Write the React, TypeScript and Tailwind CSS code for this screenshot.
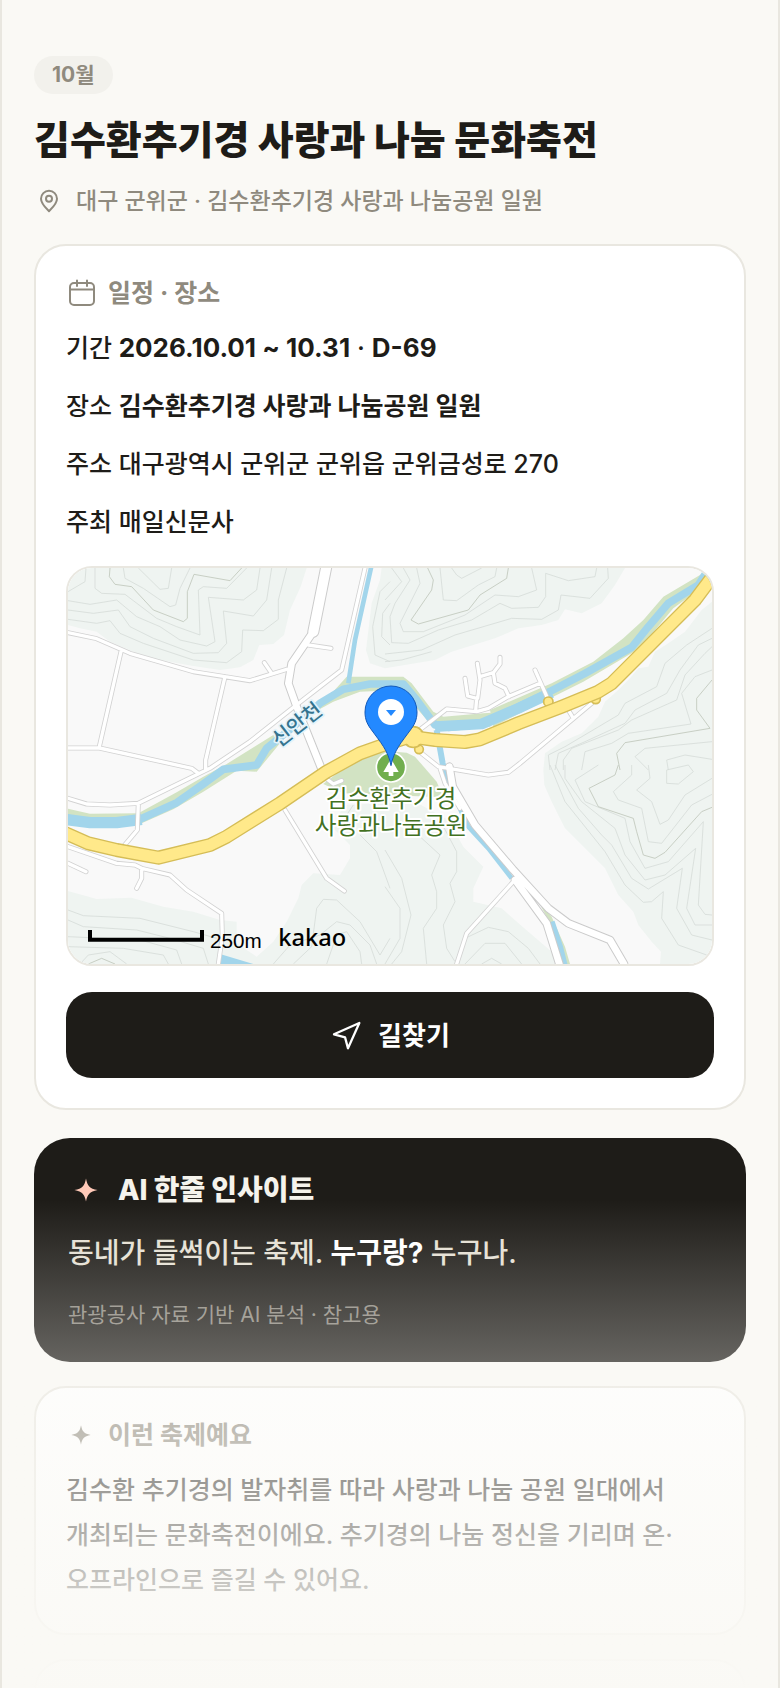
import type { ReactNode } from "react";

const details = [
  { label: "기간", date: "2026.10.01 ~ 10.31", dday: "D-69" },
  { label: "장소", strong: "김수환추기경 사랑과 나눔공원 일원" },
  { label: "주소", text: "대구광역시 군위군 군위읍 군위금성로 270" },
  { label: "주최", text: "매일신문사" },
];

export default function App() {
  return (
    <div className="relative h-screen overflow-hidden border-x-2 border-[#e9e7e0] bg-[#faf9f5] px-8 pt-14 font-['Inter','Noto_Sans_CJK_KR',sans-serif] font-medium text-[#1e1c18]">
      <main>
        <header>
          <span className="inline-flex h-[38px] items-center rounded-full bg-[#f2f1ec] px-[18px] align-top text-[21px] font-bold text-[#8f8a7e]">
            10월
          </span>
          <h1 className="mt-5 text-[39px] leading-[52px] font-extrabold">김수환추기경 사랑과 나눔 문화축전</h1>
          <p className="mt-5 flex items-center gap-3 text-[23px] leading-[30px] text-[#8f8a7e]">
            <span className="flex w-[30px] justify-center">
              <PinIcon />
            </span>
            대구 군위군 · 김수환추기경 사랑과 나눔공원 일원
          </p>
        </header>

        <section className="mt-7 rounded-[32px] border-2 border-[#e9e7e0] bg-white p-[30px]">
          <CardTitle icon={<CalendarIcon />}>일정 · 장소</CardTitle>
          <ul className="mt-4 flex flex-col gap-[14px] text-[25px] leading-[44px]">
            {details.map((row) => (
              <li key={row.label}>
                {row.label}{" "}
                {row.date && (
                  <span className="text-[26px]">
                    <strong className="font-bold">{row.date}</strong> · <strong className="font-bold">{row.dday}</strong>
                  </span>
                )}
                {row.strong && <strong className="font-bold">{row.strong}</strong>}
                {row.text}
              </li>
            ))}
          </ul>
          <div className="mt-[22px] overflow-hidden rounded-[26px] border-2 border-[#e9e7e0]">
            <FestivalMap />
          </div>
          <button
            type="button"
            className="mt-[26px] flex h-[86px] w-full items-center justify-center gap-4 rounded-[26px] bg-[#1e1c18] text-[26px] font-bold text-white"
          >
            <NavigationIcon />
            길찾기
          </button>
        </section>

        <section className="mt-7 rounded-[36px] bg-[#1e1c18] px-[34px] pt-[35px] pb-8">
          <h2 className="flex items-center gap-[14px] text-[28px] leading-[34px] font-extrabold text-[#f5f3ec]">
            <span className="flex w-9 justify-center text-[#ffc9b8]">
              <Sparkle className="size-6" />
            </span>
            AI 한줄 인사이트
          </h2>
          <p className="mt-6 text-[28px] leading-[44px] text-[#e5e0d4]">
            동네가 들썩이는 축제. <strong className="font-bold text-white">누구랑?</strong> 누구나.
          </p>
          <p className="mt-[25px] text-[21px] leading-[30px] font-normal text-[#8c887f]">
            관광공사 자료 기반 AI 분석 · 참고용
          </p>
        </section>

        <section className="mt-6 rounded-[32px] border-2 border-[#e9e7e0] bg-white p-[30px]">
          <CardTitle icon={<Sparkle className="size-5" />}>이런 축제예요</CardTitle>
          <p className="mt-4 text-[25px] leading-[45px] break-keep">
            김수환 추기경의 발자취를 따라 사랑과 나눔 공원 일대에서 개최되는 문화축전이에요. 추기경의 나눔
            정신을 기리며 온·오프라인으로 즐길 수 있어요.
          </p>
        </section>

        <section className="mt-6 h-60 rounded-[32px] border-2 border-[#e9e7e0] bg-white" />
      </main>

      {/* fades the rest of the page out towards the fold */}
      <div className="pointer-events-none absolute inset-x-[-2px] bottom-0 h-[488px] bg-linear-to-b from-[#faf9f5]/0 to-[#faf9f5]/98" />
    </div>
  );
}

function CardTitle({ icon, children }: { icon: ReactNode; children: ReactNode }) {
  return (
    <h2 className="flex items-center gap-3 text-[25px] leading-[34px] font-bold text-[#8f8a7e]">
      <span className="flex w-[30px] justify-center">{icon}</span>
      {children}
    </h2>
  );
}

function PinIcon() {
  return (
    <svg viewBox="0 0 24 24" className="size-6" fill="none" stroke="currentColor" strokeWidth="2">
      <path d="M12 22.2C9 19.2 4 14.8 4 9.8a8 8 0 0 1 16 0c0 5-5 9.400-8 12.400z" strokeLinejoin="round" />
      <circle cx="12" cy="9.700" r="3" />
    </svg>
  );
}

function CalendarIcon() {
  return (
    <svg
      viewBox="0 0 30 30"
      className="size-[30px]"
      fill="none"
      stroke="currentColor"
      strokeWidth="2"
      strokeLinecap="round"
    >
      <rect x="4" y="5" width="24" height="22" rx="4" />
      <path d="M4 11.500h24M11 2.500v5.500M21 2.500v5.500" />
    </svg>
  );
}

function NavigationIcon() {
  return (
    <svg
      viewBox="0 0 24 24"
      className="size-8"
      fill="none"
      stroke="currentColor"
      strokeWidth="1.700"
      strokeLinejoin="round"
    >
      <path d="M3 11.500 22 3l-8.500 19-2.200-8.200z" />
    </svg>
  );
}

function Sparkle({ className }: { className: string }) {
  return (
    <svg viewBox="0 0 24 24" className={className} fill="currentColor">
      <path d="M12 .4c1.400 7.300 3.500 10 11.600 11.600C15.500 13.600 13.400 16.300 12 23.600 10.600 16.300 8.500 13.600.4 12 8.500 10.400 10.600 7.700 12 .4z" />
    </svg>
  );
}

const hills = [
  "M24 24H740L722 80 690 150 672 225 640 252 598 255 580 300 540 322 480 330 400 318 300 300 230 280 150 245 110 215 60 205 24 195Z",
  "M965 24 960 60 935 130 918 270 930 310 975 325 1125 300 1175 275 1305 235 1375 205 1445 195 1495 180 1515 148 1565 160 1625 130 1665 75 1695 24Z",
  "M1956 125 1925 150 1875 215 1825 250 1785 275 1765 320 1735 325 1710 355 1675 390 1635 425 1615 470 1565 520 1505 545 1455 580 1450 630 1453 675 1475 725 1515 805 1575 865 1635 925 1675 1005 1720 1055 1735 1095 1775 1145 1803 1175 1800 1212H1956Z",
  "M24 993 110 1017 215 1013 310 1040 400 1055 480 1080 530 1085 530 1150 590 1190 640 1145 680 1085 715 1015 725 975 760 940 840 945 870 895 870 855 820 805 850 735 1065 725 1165 780 1210 860 1270 920 1240 985 1240 1025 1325 1045 1405 1115 1475 1175 1485 1212H24Z",
];

// contour lines, one sheet per map quadrant
const contours = [
  {
    move: "translate(0 0)",
    lines: [
      "M24 95 75 65 78 24",
      "M235 24 300 88 325 85 335 24",
      "M190 24 195 55 250 85 330 140 347 135 360 85 390 24",
      "M105 24 105 85 125 100 195 103 290 175 350 200 420 225 415 90 430 80 500 85 560 24",
      "M24 122 90 133 170 120 230 170 300 200 360 240 440 258 465 245 445 112 550 120 590 90 600 24",
      "M24 150 100 160 175 150 210 200 280 235 400 280 475 278 500 250 490 153 580 168 620 120 635 24",
      "M24 178 110 190 150 182 180 220 250 250 400 300 500 308 545 275 548 210 610 212 655 178 655 120 680 24",
      "M990 65 960 95 938 200 945 285 990 305M990 130 968 160 965 230 990 255",
    ],
    index: "M150 24 148 50 165 73 215 80 280 150 370 185 382 175 382 95 402 43 510 62 545 24",
  },
  {
    move: "translate(975 0)",
    lines: [
      "M200 24 215 45 230 55 290 24",
      "M165 24 175 120 215 122 280 75 330 50 335 24",
      "M95 24 105 70 45 190 55 215 115 215 240 165 330 105 400 110 455 90 440 24",
      "M55 24 75 60 30 130 15 170 20 248 70 250 160 210 260 180 345 130 380 145 460 142 482 110 482 40 550 62 630 50 635 24",
      "M20 24 50 65 0 120M0 282 110 270 210 225 380 175 470 178 520 150 528 105 615 115 670 55 668 24",
      "M0 305 50 300 140 275",
      "M981 205 905 255 840 310 815 380 720 430 700 465 540 560 490 585 495 630",
      "M981 235 940 255 885 330 845 400 750 450 720 490 600 545 520 580 510 630",
      "M981 260 960 280 900 345 875 420 740 480 700 510 560 565 535 600 535 630",
      "M981 330 930 350 890 400 905 450 918 492 730 520 680 550 600 575 590 630",
      "M981 545 780 565 750 590 790 630M981 598 900 585 845 600 850 630",
    ],
    index: "M128 24 145 60 140 90 78 180 100 192 250 150 285 105 365 55 370 24M981 360 935 415 935 450 975 505 720 548 695 580 705 630",
  },
  {
    move: "translate(0 615)",
    lines: [
      "M24 435 70 452 240 460 400 500 470 520",
      "M24 465 70 485 230 495 330 520 430 550 445 597",
      "M24 515 240 525 350 555 365 597",
      "M24 545 190 550 310 570 325 597",
      "M60 597 85 570 150 560 200 597",
      "M700 597 755 545 770 430 790 403 830 405 900 470 960 570 990 520",
      "M640 597 690 540 780 510 830 470 870 480 930 540 950 597",
      "M800 597 830 510 860 500 900 560 905 597",
      "M880 120 850 165M900 210 950 260 990 370",
    ],
    index: "M85 597 125 580 165 597",
  },
  {
    move: "translate(975 615)",
    lines: [
      "M495 0 540 110 660 260 720 360 775 412 800 410 835 380 830 460 880 540 965 570",
      "M510 0 580 130 650 210 680 240 740 340 790 372 892 310 875 430 920 510 981 525",
      "M540 0 540 40 590 110 690 190 720 270 780 345 840 330 932 250 905 430 930 480 981 480",
      "M640 0 570 45 600 110 720 160 735 230 780 310 850 290 955 170 940 420 960 448 981 450",
      "M740 0 740 30 685 80 700 105 770 130 790 230 830 235 920 120 981 88",
      "M790 0 795 40 755 75 800 110 825 178 850 165 900 90 981 40",
      "M845 15 910 0 925 20 880 57 845 55Z",
      "M105 215 165 270 140 330 155 380 155 430 115 490 125 597",
      "M165 165 215 260 215 320 195 355 210 410 175 480 185 550 210 590",
      "M0 255 50 340 78 450 50 560 20 597M0 365 45 430 45 520 0 597",
      "M240 520 310 487 370 500 430 550 465 597M240 597 300 535 360 535 410 597M290 597 320 580 350 597",
    ],
    index: "M700 0 690 30 612 70 640 125 745 160 755 200 775 270 810 280 840 262 950 140 981 127",
  },
];

const lanes = [
  "M24 218 110 236 210 280 400 335 495 350 570 362 680 328",
  "M183 275 118 560M24 564H118L395 625 415 640",
  "M495 350 437 600 437 630",
  "M915 24 845 330 780 380 690 450 570 545 450 625 235 730 150 735 80 732 24 715",
  "M235 730 232 810 190 860",
  "M745 255 813 265M613 308 635 340",
  "M24 860 170 910 225 915 245 925 330 945 380 990 485 1060 487 1130 475 1212",
  "M245 925 245 955 230 985M24 910 78 935",
  "M675 750 800 955 853 993M785 645 820 672 845 662",
  "M1085 505 1160 447 1250 455 1285 445 1345 410 1440 370M1425 330 1465 420",
  "M1215 355 1223 408 1250 415 1247 452M1252 310 1260 360 1253 415",
  "M1260 350 1300 338 1320 312 1320 292M1300 338 1305 370 1335 385 1347 410",
  "M1085 580 1135 620 1285 645 1345 637 1380 610 1595 430M1525 450 1540 475",
  "M1140 625 1155 670 1200 745M1360 965 1220 1120 1190 1212",
];

const roads = [
  "M760 215 695 310 685 370 710 440 790 640",
  "M1168 620 1178 680 1245 795 1360 930 1465 1045 1525 1090 1650 1140 1692 1212",
  "M1365 960 1460 1090 1498 1212",
];

const wideRoad = "M801 10 760 215";

const highway =
  "M0 812 24 823 85 850 170 870 295 893 450 855 500 830 660 730 800 635 900 580 970 555 1050 530 1125 540 1215 546 1260 538 1375 490 1505 440 1615 395 1655 370 1775 250 1905 120 1980 20";

const river =
  "M0 770 24 775 90 787 170 787 240 778 350 728 430 672 490 628 590 615 620 565 700 500 780 430 850 388 930 372 1030 372 1070 420 1125 495 1165 502 1265 492 1375 440 1475 392 1575 340 1715 262 1765 200 1825 130 1915 75 1950 20";

function FestivalMap() {
  return (
    <svg
      viewBox="24 24 1932 1188"
      className="block h-auto w-full bg-[#f9f9f9]"
      role="img"
      aria-label="김수환추기경 사랑과나눔공원 지도"
      fill="none"
    >
      <g fill="#eff4f1">
        {hills.map((d) => (
          <path key={d} d={d} />
        ))}
      </g>
      <g strokeWidth="2.500" strokeLinejoin="round">
        {contours.map((sheet) => (
          <g key={sheet.move} transform={sheet.move}>
            <path d={sheet.lines.join("")} stroke="#d6dcd8" />
            <path d={sheet.index} stroke="#bfc6ba" />
          </g>
        ))}
      </g>

      {/* green banks and park */}
      <g fill="#d2e3c3">
        <path d="M790 672 870 610 970 572 1040 578 1065 590 1130 665 1150 712 850 700Z" />
        <path d="M24 746 90 761 235 760 350 697 430 650 500 612 640 525 660 550 590 635 530 632 430 695 340 748 240 792 24 785Z" />
        <path d="M860 350 1030 350 1055 370 1120 455 1150 470 1270 460 1340 455 1290 500 1120 500 1020 390 900 395 820 425 765 455Z" />
        <path d="M1290 450 1475 370 1600 305 1690 235 1750 180 1810 110 1920 45 1950 24 1956 60 1840 145 1740 265 1570 365 1300 500Z" />
        <path d="M1430 1015 1475 1070 1515 1160 1530 1212H1505L1470 1090Z" />
      </g>
      <g stroke="#a2d5eb" strokeLinejoin="round">
        <path d={river} strokeWidth="23" />
        <path d="M0 776 90 788 170 788 245 778" strokeWidth="34" />
        <path d="M1125 500 1265 492 1375 445 1475 398" strokeWidth="32" />
        <path d="M936 10 885 240 865 370" strokeWidth="14" />
        <path d="M1130 510 1148 610 1155 640 1195 735" strokeWidth="18" />
        <path d="M1195 735 1225 800 1285 865 1355 955" strokeWidth="14" />
        <path d="M1475 1085 1500 1160 1515 1220" strokeWidth="18" />
      </g>
      <path d="M480 1182 580 1212H480Z" fill="#a2d5eb" />

      <g strokeLinejoin="round" strokeLinecap="round">
        <path d={lanes.join("")} stroke="#d2d2d2" strokeWidth="15" />
        <path d={roads.join("")} stroke="#cbcbcb" strokeWidth="26" />
        <path d={wideRoad} stroke="#cbcbcb" strokeWidth="36" />
        <path d={lanes.join("")} stroke="#fff" strokeWidth="10" />
        <path d={roads.join("")} stroke="#fff" strokeWidth="20" />
        <path d={wideRoad} stroke="#fff" strokeWidth="30" />
      </g>

      <g fill="#ffe98a" stroke="#d5bd57" strokeWidth="5">
        <circle cx="1077" cy="568" r="13" />
        <circle cx="1465" cy="425" r="14" />
        <circle cx="1607" cy="417" r="14" />
        <circle cx="1060" cy="531" r="31" />
      </g>
      <path d={highway} stroke="#d5bd57" strokeWidth="42" strokeLinejoin="round" />
      <path d={highway} stroke="#ffe98a" strokeWidth="34" strokeLinejoin="round" />
      <circle cx="1060" cy="531" r="28" fill="#ffe98a" />

      <g
        className="font-['Liberation_Sans','Noto_Sans_CJK_KR',sans-serif]"
        textAnchor="middle"
        strokeLinejoin="round"
        paintOrder="stroke"
      >
        <text
          transform="translate(724 511) rotate(-38)"
          fontSize="62"
          fontWeight="500"
          fill="#35748f"
          stroke="#e4f3fa"
          strokeWidth="10"
        >
          신안천
        </text>
        <g fontSize="71" fontWeight="400" fill="#42711f" stroke="#fff" strokeWidth="12">
          <text x="993" y="741">
            김수환추기경
          </text>
          <text x="993" y="823">
            사랑과나눔공원
          </text>
        </g>
      </g>

      <circle cx="993" cy="622" r="44" fill="#71ae4e" stroke="#fff" strokeWidth="5" />
      <path d="M993 596 1016 636H1000V648H986V636H970Z" fill="#fff" />
      <path
        d="M993 617C985 572 960 545 937 513 923 495 915 480 915 456a78 78 0 0 1 156 0c0 24-8 39-22 57-23 32-48 59-56 104z"
        fill="#2389ff"
        stroke="#1459b8"
        strokeWidth="3"
      />
      <circle cx="993" cy="456" r="39" fill="#fff" />
      <path d="M978 450h30l-15 18z" fill="#2389ff" />

      <path d="M90 1110V1139H426V1110" stroke="#000" strokeWidth="12" />
      <g fill="#000">
        <text x="450" y="1163" fontSize="62" fontWeight="400" className="font-['Liberation_Sans',sans-serif]">
          250m
        </text>
        <text x="655" y="1157" fontSize="71" fontWeight="500" className="font-['Noto_Sans',sans-serif]">
          kakao
        </text>
      </g>
    </svg>
  );
}
